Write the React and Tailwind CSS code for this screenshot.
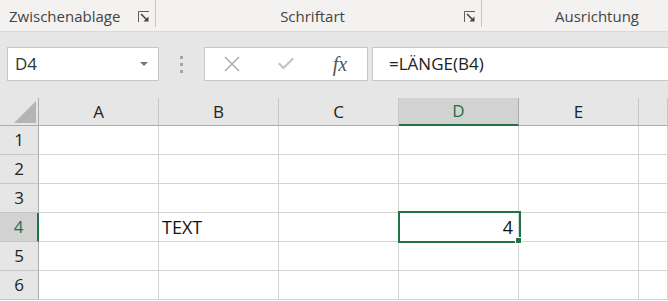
const cols = ["A", "B", "C", "D", "E", ""];
const rows = [1, 2, 3, 4, 5, 6];

const Launcher = () => (
  <svg width="12" height="12" viewBox="0 0 12 12" className="shrink-0">
    <path d="M0.5 11V0.5H11" fill="none" stroke="#5f5f5f" strokeWidth="1" />
    <path d="M3 3L9.5 9.5" stroke="#444" strokeWidth="1.6" />
    <path d="M5.5 10.5H10.5V5.5Z" fill="#444" />
  </svg>
);

const App = () => {
  return (
    <div className="w-[668px] h-[301px] overflow-hidden bg-white font-['Open_Sans',sans-serif] text-[#333]">
      {/* ribbon group labels */}
      <div className="h-[32px] flex bg-[#f3f2f1] border-b border-[#dadada] text-[15px] text-[#444]">
        <div className="w-[156px] h-[27px] flex items-end justify-between pl-[9px] pr-[5px] pb-[1px] border-r border-[#c8c6c4]">
          <span className="leading-[20px]">Zwischenablage</span>
          <span className="mb-[3px]"><Launcher /></span>
        </div>
        <div className="w-[326px] h-[27px] flex items-end pb-[1px] border-r border-[#c8c6c4] relative">
          <span className="flex-1 text-center leading-[20px] pl-[5px]">Schriftart</span>
          <span className="mb-[3px] mr-[5px]"><Launcher /></span>
        </div>
        <div className="flex-1 h-[27px] flex items-end justify-center pb-[1px] pl-[44px]">
          <span className="leading-[20px]">Ausrichtung</span>
        </div>
      </div>

      {/* formula bar */}
      <div className="h-[66px] bg-[#e6e6e6] flex items-start pt-[15px] pl-[7px] gap-0">
        <div className="w-[152px] h-[34px] bg-white border border-[#c6c6c6] flex items-center justify-between pl-[7px] pr-[10px]">
          <span className="text-[17px] text-[#333]">D4</span>
          <svg width="8" height="4" viewBox="0 0 8 4"><path d="M0 0H8L4 4Z" fill="#777" /></svg>
        </div>
        <div className="w-[45px] flex flex-col items-center gap-[4px] pt-[9px]">
          <span className="w-[3px] h-[3px] bg-[#a6a6a6]" />
          <span className="w-[3px] h-[3px] bg-[#a6a6a6]" />
          <span className="w-[3px] h-[3px] bg-[#a6a6a6]" />
        </div>
        <div className="w-[164px] h-[34px] bg-white border border-[#c6c6c6] flex items-center">
          <div className="w-[54px] flex justify-center">
            <svg width="16" height="16" viewBox="0 0 16 16"><path d="M1 1L15 15M15 1L1 15" stroke="#a6a6a6" strokeWidth="1.4" /></svg>
          </div>
          <div className="w-[54px] flex justify-center">
            <svg width="18" height="16" viewBox="0 0 18 16"><path d="M1 8L6.5 13.5L17 3L15.5 1.5L6.5 10.5L2.5 6.5Z" fill="#c4c4c4" /></svg>
          </div>
          <div className="w-[54px] flex justify-center">
            <span className="font-['Liberation_Serif',serif] italic text-[20px] text-[#555] leading-none">fx</span>
          </div>
        </div>
        <div className="flex-1 ml-[4px] h-[34px] bg-white border border-[#c6c6c6] border-r-0 flex items-center pl-[16px]">
          <span className="text-[17px] text-[#222]">=LÄNGE(B4)</span>
        </div>
      </div>

      {/* sheet */}
      <div className="relative">
        <div className="grid grid-cols-[39px_120px_120px_120px_120px_120px_1fr] text-[17px]">
          <div className="h-[28px] bg-[#e6e6e6] border-r border-b border-[#ababab] flex items-end justify-end pr-[2px] pb-[2px]">
            <svg width="22" height="22" viewBox="0 0 22 22"><path d="M22 0V22H0Z" fill="#b4b4b4" /></svg>
          </div>
          {cols.map((c, i) =>
            c === "D" ? (
              <div key={i} className="h-[28px] bg-[#d2d2d2] border-r border-[#ababab] border-b-2 border-b-[#217346] flex items-center justify-center text-[#217346]">
                {c}
              </div>
            ) : (
              <div key={i} className="h-[28px] bg-[#e6e6e6] border-r border-b border-[#c6c6c6] border-b-[#ababab] flex items-center justify-center text-[#222]">
                {c}
              </div>
            )
          )}
          {rows.map((r) => (
            <Row key={r} r={r} />
          ))}
        </div>
        {/* selection */}
        <div className="absolute left-[398px] top-[113px] w-[123px] h-[32px] border-2 border-[#217346] pointer-events-none" />
        <div className="absolute left-[515px] top-[139px] w-[7px] h-[7px] bg-[#217346] border border-white" />
      </div>
    </div>
  );
};

const Row = ({ r }) => {
  const sel = r === 4;
  return (
    <>
      <div
        className={
          sel
            ? "h-[29px] bg-[#d2d2d2] border-b border-[#c6c6c6] border-r-2 border-r-[#217346] flex items-center justify-center text-[#217346]"
            : "h-[29px] bg-[#e6e6e6] border-b border-[#c6c6c6] border-r border-r-[#ababab] flex items-center justify-center text-[#222]"
        }
      >
        {r}
      </div>
      {cols.map((c, i) => (
        <div key={i} className="h-[29px] border-r border-b border-[#d4d4d4] flex items-center text-[#111]">
          {r === 4 && c === "B" && <span className="pl-[3px] text-[18px]">TEXT</span>}
          {r === 4 && c === "D" && <span className="ml-auto pr-[5px] text-[18px]">4</span>}
        </div>
      ))}
    </>
  );
};

export default App;
